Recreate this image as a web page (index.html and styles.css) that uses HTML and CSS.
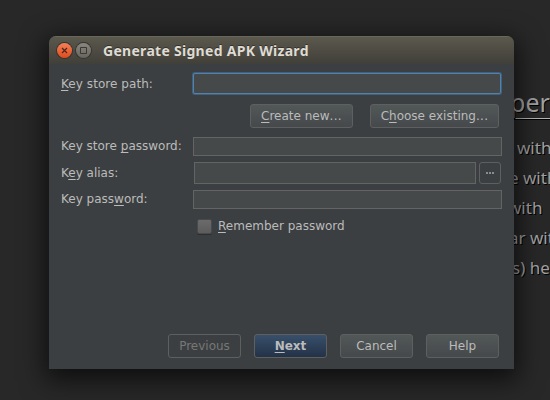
FILE: index.html
```html
<!DOCTYPE html>
<html lang="en">
<head>
<meta charset="utf-8">
<title>Generate Signed APK Wizard</title>
<link rel="stylesheet" href="styles.css">
</head>
<body>
<main class="desktop">
  <section class="page">
    <h2>per</h2>
    <p class="l1">with</p>
    <p class="l2">e with</p>
    <p class="l3">with</p>
    <p class="l4">ar with</p>
    <p class="l5">s) he</p>
  </section>
  <section class="window">
    <header class="titlebar">
      <span class="orb close"><svg width="15" height="15" viewBox="0 0 15 15"><path d="M5 5l5 5M10 5l-5 5" stroke="#4a2418" stroke-width="1.1"/></svg></span>
      <span class="orb"><svg width="15" height="15" viewBox="0 0 15 15"><path d="M4.5 4.5h6v6h-6z" fill="none" stroke="#3a3934"/></svg></span>
      <h1>Generate Signed APK Wizard</h1>
    </header>
    <form class="content">
      <div class="row path"><label><u>K</u>ey store path:</label><span class="field focused"></span></div>
      <div class="actions">
        <button type="button" class="create"><u>C</u>reate new<span class="dots">...</span></button>
        <button type="button" class="choose">C<u>h</u>oose existing<span class="dots">...</span></button>
      </div>
      <div class="row storepass"><label>Key store <u>p</u>assword:</label><span class="field"></span></div>
      <div class="row alias"><label>K<u>e</u>y alias:</label><span class="field"></span><button type="button" class="more"><i></i><i></i><i></i></button></div>
      <div class="row keypass"><label>Key pass<u>w</u>ord:</label><span class="field"></span></div>
      <div class="remember"><span class="check"></span><label><u>R</u>emember password</label></div>
      <footer class="footer">
        <button type="button" class="disabled">Previous</button>
        <button type="button" class="primary"><u>N</u>ext</button>
        <button type="button">Cancel</button>
        <button type="button">Help</button>
      </footer>
    </form>
  </section>
</main>
</body>
</html>
```
FILE: styles.css
```css
* { box-sizing: border-box; }
body { margin: 0; background: #282828; }
.desktop {
  position: relative;
  width: 550px;
  height: 400px;
  overflow: hidden;
  background: #282828;
}
.page {
  padding: 84px 0 0 506px;
  font-family: "Noto Sans", sans-serif;
  color: #a2a2a2;
  text-shadow: 1px 1px 0 #000;
  white-space: nowrap;
}
.page h2 {
  margin: 0 0 15px;
  padding-left: 4px;
  height: 35px;
  font-size: 25px;
  line-height: 37px;
  font-weight: 400;
  border-bottom: 1px solid #b5b5b5;
  box-shadow: 0 1px 0 #000;
}
.page p { margin: 0; font-size: 17px; line-height: 30px; }
.page p:first-of-type { margin-top: -1px; }
.page .l1 { padding-left: 11px; }
.page .l2 { padding-left: 3px; }
.page .l3 { padding-left: 2px; }
.page .l4 { padding-left: 3px; }
.page .l5 { padding-left: 6px; }
.window {
  position: absolute;
  left: 49px;
  top: 36px;
  width: 465px;
  height: 333px;
  display: flex;
  flex-direction: column;
  border-radius: 7px 7px 0 0;
  overflow: hidden;
  background: #3c3f41;
  box-shadow: 0 7px 26px 4px rgba(0, 0, 0, .65);
}
.titlebar {
  height: 28px;
  flex: none;
  display: flex;
  align-items: center;
  padding: 0 0 0 8px;
  gap: 4px;
  background: linear-gradient(#5b584d, #403f39);
  border-top: 1px solid #69665b;
}
.titlebar h1 {
  margin: 0 0 0 8px;
  font: 700 14px "Noto Sans", sans-serif;
  letter-spacing: .29px;
  color: #dfdbd2;
  text-shadow: 0 -1px 0 #33322e;
  white-space: nowrap;
}
.orb {
  width: 15px;
  height: 15px;
  border-radius: 50%;
  background: linear-gradient(#89877f, #66645d);
  box-shadow: 0 0 0 1px #35342f;
}
.orb svg { display: block; }
.close { background: linear-gradient(#f58058, #df4b1c); }
.content {
  flex: 1;
  display: flex;
  flex-direction: column;
  padding: 9px 12px 11px;
  font: 12px "DejaVu Sans", sans-serif;
  color: #bbb;
}
u { text-decoration: underline; text-underline-offset: 2px; text-decoration-thickness: 1px; text-decoration-skip-ink: none; }
.row { display: flex; align-items: center; }
.row label { width: 132px; flex: none; white-space: nowrap; }
.field {
  flex: 1;
  height: 100%;
  background: #45494a;
  border: 1px solid #646464;
}
.path { height: 21px; padding-right: 1px; }
.path label { letter-spacing: .06px; }
.focused {
  border-color: #5381ad;
  border-radius: 2px;
  box-shadow: 0 0 0 1px #41607e;
}
button {
  font: inherit;
  color: inherit;
  height: 24px;
  width: 73px;
  padding: 0;
  border: 1px solid #5e6060;
  border-radius: 3px;
  background: linear-gradient(#525758, #45494b);
  white-space: nowrap;
}
.dots { letter-spacing: .3px; }
.actions { display: flex; justify-content: flex-end; gap: 17px; padding-right: 3px; margin-top: 10px; }
.create { width: 103px; }
.choose { width: 129px; }
.storepass { height: 19px; margin-top: 9px; }
.storepass label, .keypass label { padding-bottom: 2px; }
.alias { height: 22px; margin-top: 6px; padding-right: 1px; }
.alias label { width: 133px; }
.more {
  width: 22px;
  height: 22px;
  margin-left: 3px;
  display: flex;
  align-items: center;
  justify-content: center;
  gap: 1px;
  background: #3c3f41;
}
.more i { width: 2px; height: 2px; background: #898b8c; }
.keypass { height: 19px; margin-top: 6px; }
.remember { display: flex; align-items: center; gap: 7px; margin: 10px 0 0 137px; }
.check {
  width: 13px;
  height: 13px;
  border-radius: 1px;
  background: linear-gradient(#6b6b6b, #5c5c5c);
  box-shadow: 0 0 0 1px #484a4b, 0 1px 0 1px #2c2e2f;
}
.footer { display: flex; justify-content: flex-end; gap: 13px; margin-top: auto; padding-right: 3px; }
.disabled { background: none; color: #777; }
.primary { font-weight: 700; background: linear-gradient(#384f6b, #233247); }
```
